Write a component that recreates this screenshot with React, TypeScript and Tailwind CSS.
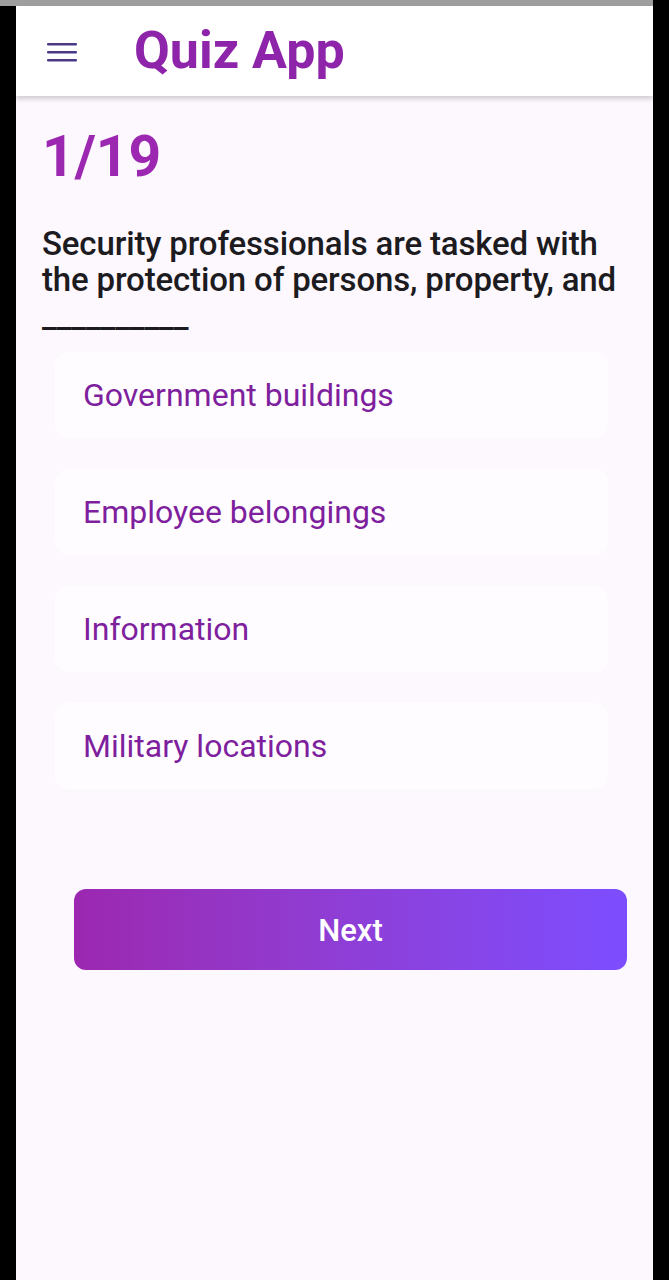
import React from 'react';

const options = ['Government buildings', 'Employee belongings', 'Information', 'Military locations'];

function Menu() {
  return (
    <svg width="30" height="20" viewBox="0 0 30 20" className="block">
      <rect x="0" y="1" width="30" height="2.6" rx="1" fill="#4a3a86" />
      <rect x="0" y="9" width="30" height="2.6" rx="1" fill="#4a3a86" />
      <rect x="0" y="17" width="30" height="2.6" rx="1" fill="#4a3a86" />
    </svg>
  );
}

export default function App() {
  return (
    <div className="flex h-[1280px] w-[669px] overflow-hidden bg-black font-['Roboto','Liberation_Sans',sans-serif]">
      <div className="flex w-[653px] flex-col">
        <div className="h-[6px] w-full bg-[#9e9e9e]" />
        <div className="flex flex-1">
          <div className="w-[16px] bg-black" />
          <div className="flex w-[637px] flex-col bg-[#fdf8fd]">
            <header className="relative z-10 flex h-[90px] items-center bg-white shadow-[0_3px_5px_rgba(0,0,0,0.18)]">
              <div className="ml-[31px] mt-[2px]">
                <Menu />
              </div>
              <h1 className="ml-[57px] text-[52px] font-bold leading-none text-[#8e24aa]">Quiz App</h1>
            </header>

            <main className="flex flex-col px-[26px] pt-[32px]">
              <div className="text-[57px] font-bold leading-[57px] text-[#9c27b0]">1/19</div>
              <p className="mt-[41px] text-[33px] font-medium leading-[36px] tracking-[-0.15px] text-[#1c1b1f]">
                Security professionals are tasked with the protection of persons, property, and __________
              </p>

              <div className="mt-[18px] flex flex-col gap-[31px] pl-[13px] pr-[19px]">
                {options.map((o) => (
                  <div
                    key={o}
                    className="flex h-[86px] items-center rounded-[14px] bg-[#fefcfe] pl-[28px] text-[32px] leading-none text-[#7e1f9e]"
                  >
                    {o}
                  </div>
                ))}
              </div>

              <button className="ml-[32px] mt-[100px] flex h-[81px] w-[553px] items-center justify-center rounded-[12px] bg-gradient-to-r from-[#9c27b0] to-[#7c4dff] pt-[3px] text-[31px] font-medium text-white">
                Next
              </button>
            </main>
          </div>
        </div>
      </div>
      <div className="w-[16px] bg-black" />
    </div>
  );
}
